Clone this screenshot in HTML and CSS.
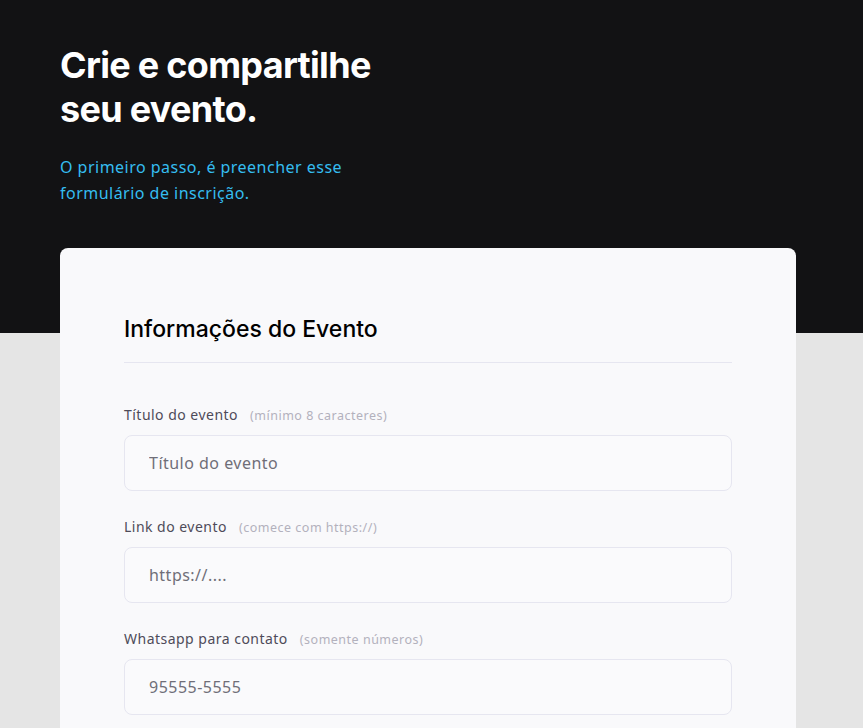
FILE: index.html
```html
<!DOCTYPE html>
<html lang="pt-BR">
<head>
<meta charset="utf-8">
<title>Crie e compartilhe seu evento</title>
<link rel="stylesheet" href="styles.css">
</head>
<body>
  <header class="hero">
    <div class="hero-inner">
      <h1 class="hero-title">Crie e compartilhe<br>seu evento.</h1>
      <p class="hero-text">O primeiro passo, é preencher esse formulário de inscrição.</p>
    </div>
  </header>
  <main class="content">
    <form class="card">
      <fieldset class="section">
        <legend class="section-title">Informações do Evento</legend>
        <div class="field">
          <label class="label" for="titulo">Título do evento <span class="hint">(mínimo 8 caracteres)</span></label>
          <input class="input" id="titulo" type="text" placeholder="Título do evento">
        </div>
        <div class="field">
          <label class="label" for="link">Link do evento <span class="hint">(comece com https://)</span></label>
          <input class="input" id="link" type="text" placeholder="https://....">
        </div>
        <div class="field">
          <label class="label" for="whats">Whatsapp para contato <span class="hint">(somente números)</span></label>
          <input class="input" id="whats" type="text" placeholder="95555-5555">
        </div>
      </fieldset>
    </form>
  </main>
</body>
</html>
```

FILE: styles.css
```css
* { box-sizing: border-box; }

html, body {
  margin: 0;
  padding: 0;
}

body {
  background: #e5e5e5;
  font-family: "Noto Sans", "DejaVu Sans", sans-serif;
  letter-spacing: 0.03em;
  -webkit-font-smoothing: antialiased;
}

.hero {
  background: #121214;
  height: 333px;
}

.hero-inner {
  width: 736px;
  margin-left: 60px;
  padding-top: 43px;
}

.hero-title {
  margin: 0;
  font-family: "Inter", sans-serif;
  font-weight: 700;
  font-size: 36px;
  line-height: 44px;
  color: #ffffff;
  letter-spacing: -0.7px;
}

.hero-text {
  margin: 23px 0 0;
  max-width: 300px;
  font-size: 16px;
  line-height: 26px;
  color: #35bdf0;
}

.content {
  margin-top: -85px;
  padding-left: 60px;
  padding-bottom: 40px;
}

.card {
  width: 736px;
  background: #f9f9fb;
  border-radius: 8px;
  padding: 64px;
}

.section {
  margin: 0;
  padding: 0;
  border: 0;
  min-width: 0;
}

.section-title {
  float: left;
  width: 100%;
  padding: 0 0 16px;
  margin: 0 0 42px;
  border-bottom: 1px solid #e6e6f0;
  font-family: "Inter", sans-serif;
  font-weight: 500;
  font-size: 23px;
  line-height: 34px;
  letter-spacing: 0;
  color: #000000;
}

.field {
  clear: both;
  display: flex;
  flex-direction: column;
  margin-bottom: 26px;
}

.label {
  display: flex;
  align-items: baseline;
  gap: 12px;
  height: 20px;
  font-size: 14px;
  line-height: 20px;
  color: #4e4b59;
  margin-bottom: 10px;
}

.hint {
  font-size: 12.5px;
  letter-spacing: 0.04em;
  color: #b3b1bd;
}

.input {
  height: 56px;
  width: 100%;
  padding: 0 24px;
  border: 1px solid #e6e6f0;
  border-radius: 8px;
  background: #fafafc;
  font-family: inherit;
  font-size: 16px;
  letter-spacing: 0.03em;
  color: #3f3f46;
  outline: none;
}

.input::placeholder {
  color: #6f6e78;
}
```
